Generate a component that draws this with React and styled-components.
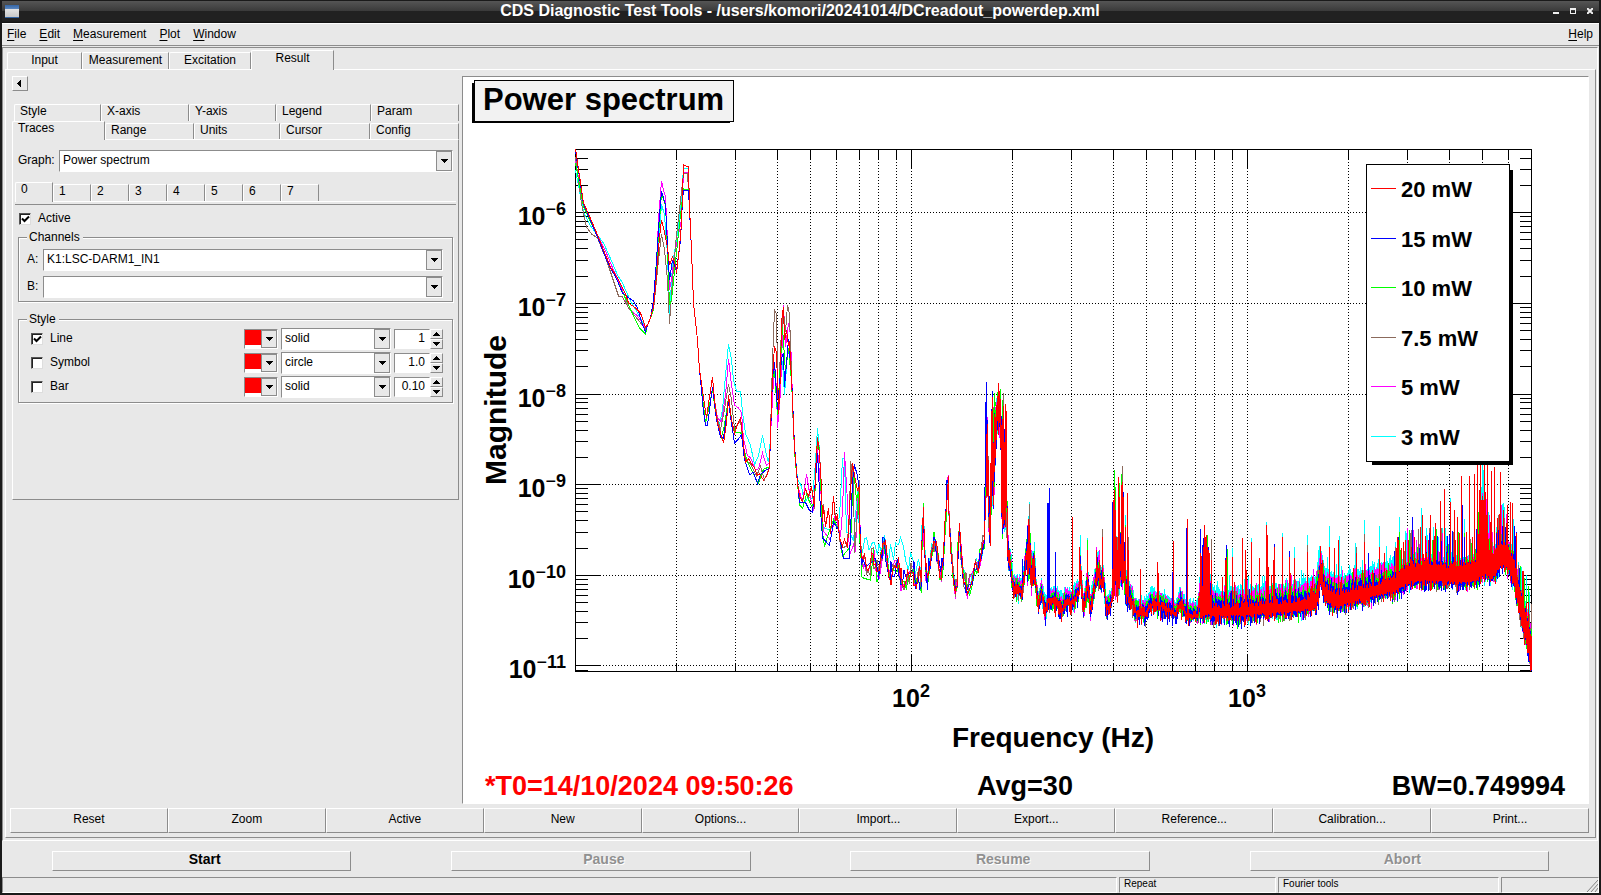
import styled, { createGlobalStyle } from "styled-components";

const GlobalStyle = createGlobalStyle`
  * {
    box-sizing: border-box;
  }
  body {
    margin: 0;
    background: #1a1a1a;
    font-family: "Liberation Sans", Arial, sans-serif;
    font-size: 12px;
    line-height: 12px;
    color: #000;
  }
  button, input, select {
    font: inherit;
    color: inherit;
    margin: 0;
    padding: 0;
    border: 0;
    border-radius: 0;
    background: none;
  }
`;

const AppWindow = styled.div`
  display: flex;
  flex-direction: column;
  min-height: 100vh;
  border: solid #1a1a1a;
  border-width: 0 2px 2px;
  background: #e8e8e8;
`;

const TitleBar = styled.header`
  display: flex;
  align-items: center;
  height: 23px;
  padding: 0 6px 2px 3px;
  border-top: 1px solid #1a1a1a;
  background: linear-gradient(#555 0, #3a3a3a 10px, #212121 10px, #212121 20px, #111 22px);
`;

const TitleIcon = styled.span`
  width: 14px;
  height: 13px;
  background: linear-gradient(#3465a4 0, #5b87c0 4px, #e4e4e4 4px, #c8c8c8 12px, #3465a4 12px);
`;

const TitleText = styled.h1`
  flex: 1;
  margin: 0;
  padding-left: 28px;
  text-align: center;
  color: #fff;
  font-size: 16px;
  line-height: 18px;
  font-weight: 700;
`;

const TitleButtons = styled.div`
  display: flex;
  gap: 11px;
`;

const TitleButton = styled.button`
  display: flex;
  width: 6px;
  height: 6px;
`;

const MenuBar = styled.nav`
  display: flex;
  gap: 13px;
  height: 23px;
  padding: 3px 6px 0 5px;
  border-top: 1px solid #fff;
  border-bottom: 1px solid #8c8c8c;
`;

const MenuItem = styled.button`
  height: 14px;
  text-underline-offset: 2px;

  &:last-child {
    margin-left: auto;
  }
`;

const MainFrame = styled.main`
  display: flex;
  flex: 1;
  flex-direction: column;
  margin: 1px 1px 0 0;
  padding: 2px 1px 2px 2px;
  border: 1px solid;
  border-color: #8c8c8c #fff #fff #8c8c8c;
`;

const TabRow = styled.div`
  display: flex;
  align-items: flex-end;
  padding-left: ${(p) => p.$indent || 0}px;
`;

const Tab = styled.button`
  width: ${(p) => p.$width}px;
  height: ${(p) => (p["aria-selected"] ? p.$height + 3 : p.$height)}px;
  margin-bottom: ${(p) => (p["aria-selected"] ? "-1px" : "0")};
  padding: ${(p) => (p.$centered ? "1px 0 0" : "0 0 0 5px")};
  display: flex;
  justify-content: ${(p) => (p.$centered ? "center" : "flex-start")};
  border: 1px solid;
  border-color: #fff #8c8c8c transparent #fff;
  border-bottom: 0;
  border-radius: 2px 0 0 0;
  background: #e8e8e8;
  z-index: 1;
`;

const TabPanel = styled.section`
  display: flex;
  flex: 1;
  flex-direction: column;
  gap: 4px;
  padding: 6px 6px 4px 4px;
  border: 1px solid;
  border-color: #fff #8c8c8c #8c8c8c #fff;
`;

const ResultArea = styled.div`
  display: flex;
  flex: 1;
  align-items: stretch;
`;

const SidePanel = styled.aside`
  flex: 0 0 452px;
  padding: 0 3px 0 2px;
`;

const RaisedButton = styled.button`
  border: 1px solid;
  border-color: #fff #8c8c8c #8c8c8c #fff;
  background: #e8e8e8;
`;

const CollapseButton = styled(RaisedButton)`
  display: flex;
  align-items: center;
  justify-content: center;
  width: 16px;
  height: 15px;
  margin-bottom: 13px;
  padding-right: 2px;
`;

const OptionPanel = styled.div`
  height: 361px;
  padding: 10px 5px 0 5px;
  border: 1px solid;
  border-color: #fff #8c8c8c #8c8c8c #fff;
`;

const Field = styled.label`
  display: flex;
  align-items: center;
  margin-bottom: ${(p) => p.$below || 0}px;
`;

const FieldLabel = styled.span`
  width: ${(p) => p.$width}px;
  padding-bottom: 3px;
`;

const ComboBox = styled.span`
  position: relative;
  display: flex;
  flex: 1;
  height: 22px;
  border: 1px solid;
  border-color: #8c8c8c #fff #fff #8c8c8c;
  background: #fff;
`;

const ComboSelect = styled.select`
  appearance: none;
  flex: 1;
  min-width: 0;
  padding: 0 18px 3px 3px;
  line-height: 16px;
`;

const ComboArrow = styled.span`
  position: absolute;
  top: 0;
  right: 0;
  bottom: 0;
  display: flex;
  align-items: center;
  justify-content: center;
  width: 16px;
  border: 1px solid #8c8c8c;
  background: #e8e8e8;
  pointer-events: none;
`;

const TraceRule = styled.div`
  height: 4px;
  border-top: 1px solid #fff;
  border-bottom: 1px solid #8c8c8c;
`;

const TraceTabs = styled.div`
  margin: 0 -3px 8px -3px;
  padding-top: 3px;
`;

const CheckField = styled.label`
  display: flex;
  align-items: center;
  gap: 7px;
  height: 12px;
  margin-left: ${(p) => p.$indent}px;
`;

const CheckText = styled.span`
  padding-bottom: 3px;
`;

const CheckBox = styled.span`
  position: relative;
  display: flex;
  width: 12px;
  height: 12px;

  svg {
    position: absolute;
    top: 2px;
    left: 2px;
    display: none;
    pointer-events: none;
  }
  input:checked + svg {
    display: block;
  }
`;

const CheckInput = styled.input`
  appearance: none;
  width: 12px;
  height: 12px;
  border: 1px solid;
  border-color: #555 #ddd #ddd #555;
  background: #fff;
  box-shadow: inset 1px 1px 0 #222;
`;

const Group = styled.fieldset`
  min-width: 0;
  margin: ${(p) => p.$above}px 0 0;
  padding: ${(p) => p.$top}px 9px 3px 8px;
  border: 1px solid #8c8c8c;
  box-shadow: 1px 1px 0 #fff, inset 1px 1px 0 #fff;
`;

const GroupTitle = styled.legend`
  padding: 0 3px 0 2px;
  background: #e8e8e8;
`;

const StyleRow = styled.div`
  display: flex;
  align-items: center;
  gap: 3px;
  height: 24px;
`;

const StyleName = styled.div`
  flex: 1;
`;

const ColorButton = styled.button`
  position: relative;
  width: 34px;
  height: 20px;
  padding-bottom: 3px;
  border: 1px solid;
  border-color: #8c8c8c #fff #fff #8c8c8c;
  background: #fff;
`;

const Swatch = styled.span`
  display: block;
  width: 17px;
  height: 15px;
  background: #f00;
`;

const StyleCombo = styled.div`
  display: flex;
  width: 110px;
`;

const Spinner = styled.div`
  display: flex;
  width: 49px;
  height: 20px;
`;

const SpinInput = styled.input`
  appearance: textfield;
  flex: 1;
  min-width: 0;
  padding: 0 4px 3px 0;
  border: 1px solid;
  border-color: #8c8c8c #fff #fff #8c8c8c;
  background: #fff;
  text-align: right;

  &::-webkit-inner-spin-button {
    appearance: none;
    margin: 0;
  }
`;

const SpinButtons = styled.div`
  display: flex;
  flex-direction: column;
  width: 13px;
`;

const SpinButton = styled(RaisedButton)`
  display: flex;
  flex: 1;
  align-items: center;
  justify-content: center;
`;

const Canvas = styled.div`
  flex: 1;
  min-width: 0;
  border: 1px solid;
  border-color: #8c8c8c #fff #fff #8c8c8c;
  background: #fff;

  svg {
    display: block;
    width: 100%;
    height: auto;
  }
`;

const PlotActions = styled.div`
  display: grid;
  grid-template-columns: repeat(10, 1fr);
`;

const PlotButton = styled(RaisedButton)`
  height: 25px;
  padding-bottom: 3px;
`;

const RunBar = styled.div`
  display: grid;
  grid-template-columns: repeat(4, 1fr);
  justify-items: center;
  padding: 10px 0 6px;
`;

const RunButton = styled(RaisedButton)`
  width: 75%;
  height: 20px;
  padding: 0 0 7px 6px;
  font-size: 14px;
  line-height: 14px;
  font-weight: 700;

  &:disabled {
    color: #909090;
    text-shadow: 1px 1px 0 #fff;
  }
`;

const StatusBar = styled.footer`
  display: grid;
  grid-template-columns: 1fr 157px 221px 98px;
  gap: 2px;
  font-size: 10px;
`;

const StatusCell = styled.span`
  display: flex;
  justify-content: ${(p) => (p.$grip ? "flex-end" : "flex-start")};
  height: 16px;
  padding-left: 4px;
  border: 1px solid;
  border-color: #8c8c8c #fff #fff #8c8c8c;
`;

const ARROWS = {
  down: "M0 1h7v1h-1v1h-1v1h-1v1h-1v-1h-1v-1h-1v-1h-1z",
  up: "M3 1h1v1h1v1h1v1h1v1h-7v-1h1v-1h1v-1h1z",
};

function Arrow({ dir }) {
  return (
    <svg width="7" height="6" shapeRendering="crispEdges" aria-hidden="true">
      <path d={ARROWS[dir]} />
    </svg>
  );
}

function Combo({ options, ...rest }) {
  return (
    <ComboBox>
      <ComboSelect {...rest}>
        {options.map((o) => (
          <option key={o}>{o}</option>
        ))}
      </ComboSelect>
      <ComboArrow>
        <Arrow dir="down" />
      </ComboArrow>
    </ComboBox>
  );
}

function Check({ label, checked, indent }) {
  return (
    <CheckField $indent={indent}>
      <CheckBox>
        <CheckInput type="checkbox" defaultChecked={checked} />
        <svg width="9" height="8" aria-hidden="true">
          <path d="M1 3.5L3.5 6L8 1.5" fill="none" stroke="#000" strokeWidth="2" />
        </svg>
      </CheckBox>
      <CheckText>{label}</CheckText>
    </CheckField>
  );
}

/* ---------- plot ---------- */

const FRAME = { left: 575.5, top: 149.5, right: 1531.5, bottom: 671.5 };
const fx = (hz) => Math.floor(911.5 + 336 * (Math.log10(hz) - 2)) + 0.5;
const my = (mag) => Math.floor(212.7 - 90.65 * (Math.log10(mag) + 6)) + 0.5;

const decades = (from, to) => {
  const ticks = [];
  for (let d = from; d <= to; d++) {
    for (let m = 1; m < 10; m++) ticks.push({ major: m === 1, value: m * Math.pow(10, d) });
  }
  return ticks;
};
const X_TICKS = decades(1, 3).filter((t) => t.value > 10 && t.value < 7000);
const Y_TICKS = decades(-11, -6).filter((t) => t.value < 4.9e-6);

const BASE = [
  575, 149, 583, 203, 588, 214, 597, 235, 603, 250, 610, 267, 617, 278, 625, 294, 628, 303, 635, 308, 640, 313,
  645, 327, 647, 325, 650, 318, 653, 307, 655, 287, 657, 263, 659, 237, 661, 220, 663, 228, 665, 237, 667, 247,
  669, 265, 672, 257, 675, 265, 676, 273, 679, 247, 681, 223, 682, 193, 683, 165, 688, 167, 689, 207, 691, 250,
  693, 303, 697, 340, 699, 370, 702, 390, 706, 418, 709, 397, 712, 377, 714, 400, 717, 423, 720, 433, 723, 443,
  726, 423, 728, 395, 731, 420, 734, 433, 736, 427, 740, 418, 743, 443, 745, 463, 748, 458, 751, 463, 754, 468,
  757, 475, 759, 473, 763, 480, 766, 475, 769, 468, 770, 433, 772, 377, 774, 345, 776, 353, 778, 413, 780, 373,
  781, 320, 783, 306, 784, 340, 786, 330, 788, 347, 789, 340, 791, 380, 792, 400, 794, 447, 797, 483, 799, 497,
  802, 502, 805, 490, 808, 497, 811, 487, 814, 507, 815, 470, 817, 437, 819, 453, 821, 487, 822, 523, 823, 505,
  825, 527, 828, 507, 830, 533, 833, 495, 835, 520, 837, 513, 839, 537, 842, 547, 844, 538, 847, 547, 850, 490,
  852, 463, 855, 480, 857, 490, 859, 487, 861, 560, 863, 560, 866, 567, 870, 567, 873, 552, 875, 567, 879, 572,
  882, 550, 884, 540, 887, 563, 890, 577, 892, 567, 897, 565, 900, 573, 902, 583, 906, 580, 909, 577, 913, 568,
  915, 580, 918, 573, 921, 583, 923, 505, 925, 567, 927, 580, 930, 560, 933, 543, 935, 540, 938, 560, 941, 580,
  943, 560, 946, 507, 948, 477, 949, 523, 952, 563, 955, 590, 957, 580, 959, 523, 962, 567, 965, 580, 967, 590,
  972, 577, 975, 563, 978, 567, 981, 553, 984, 540, 986, 480, 987, 423, 988, 500, 990, 543, 991, 453, 992, 400,
  993, 503, 995, 413, 996, 440, 998, 388, 999, 400, 1001, 457, 1002, 530, 1003, 407, 1004, 523, 1005, 410,
  1006, 420, 1007, 533, 1008, 563,
];

// stretches where a trace leaves the common curve
const TRACES = [
  {
    name: "3 mW",
    color: "#00ffff",
    rise: 18,
    drop: 0,
    runs: [
      [575, 170, 583, 212, 590, 226, 600, 239, 603, 243, 612, 263, 617, 275, 622, 283, 630, 301, 636, 311, 640, 318, 645, 329],
      [653, 307, 657, 265, 661, 204, 664, 215, 667, 255, 669, 315, 672, 265, 676, 240, 680, 210, 683, 168, 688, 169, 689, 207],
      [717, 420, 719, 424, 722, 410, 725, 375, 728, 344, 731, 360, 733, 380, 736, 391, 740, 392, 742, 410, 745, 434, 750, 443, 754, 465, 758, 455, 762, 437, 766, 455, 768, 463, 769, 455],
      [772, 380, 774, 365, 777, 415, 782, 360, 784, 393, 788, 340, 791, 375],
      [794, 447, 797, 480, 801, 485, 804, 500, 808, 495, 812, 500, 815, 460, 817, 428, 819, 450, 822, 525, 828, 527, 832, 528, 836, 520, 839, 515, 842, 460, 844, 460, 846, 530, 850, 532, 853, 540, 857, 490, 861, 550, 863, 545, 866, 540, 872, 537, 877, 546, 881, 545, 884, 534, 888, 553, 893, 551, 898, 547, 903, 553, 908, 565, 913, 563, 918, 560, 921, 570],
    ],
    spikes: [1080, 535, 1087, 538, 1125, 515, 1187, 578, 1232, 548, 1251, 538, 1266, 522, 1282, 533, 1294, 547, 1307, 535, 1329, 526, 1339, 536, 1355, 543, 1364, 520, 1372, 561, 1379, 526, 1386, 546, 1399, 517, 1405, 531, 1411, 533, 1421, 508, 1427, 535, 1433, 527, 1438, 537, 1450, 498, 1464, 519, 1482, 463, 1483, 470, 1496, 527, 1504, 507, 1507, 505, 1521, 567, 1529, 592],
  },
  {
    name: "5 mW",
    color: "#ff00ff",
    rise: 13,
    drop: 0,
    runs: [
      [575, 160, 583, 207, 588, 216, 600, 241, 605, 251, 613, 270, 620, 285, 628, 308, 637, 316, 645, 328],
      [653, 303, 656, 265, 658, 220, 661, 181, 663, 190, 665, 197, 667, 240, 669, 290, 671, 280, 674, 255, 677, 240, 681, 220, 683, 172, 687, 172, 689, 207],
      [717, 418, 721, 422, 725, 395, 728, 359, 731, 385, 734, 405, 738, 408, 741, 410, 743, 440, 747, 453, 750, 456, 755, 470, 758, 470, 762, 455, 766, 466, 769, 463],
      [770, 433, 774, 360, 776, 390, 777, 428, 780, 390, 783, 306, 785, 345, 788, 321, 790, 335, 793, 433],
      [797, 483, 802, 500, 806, 473, 809, 492, 813, 510, 817, 450, 821, 500, 823, 530, 830, 538, 835, 515, 840, 535, 842, 510, 844, 450, 847, 500, 849, 554, 853, 545, 855, 554, 857, 500, 860, 530, 861, 560],
    ],
    spikes: [1096, 547, 1099, 550, 1115, 492, 1334, 555, 1410, 543, 1450, 508, 1507, 516],
  },
  {
    name: "7.5 mW",
    color: "#8b6a5c",
    rise: 7,
    drop: 1,
    runs: [
      [575, 157, 581, 204, 586, 227, 591, 234, 597, 238, 606, 260, 612, 278, 615, 287, 618, 296, 622, 297, 628, 308, 637, 319, 645, 329],
      [653, 310, 657, 270, 661, 234, 664, 250, 667, 280, 669, 324, 672, 280, 676, 235, 679, 210, 683, 173, 687, 174, 689, 207],
      [717, 420, 720, 429, 723, 415, 728, 384, 731, 400, 734, 429, 740, 421, 743, 445, 746, 460, 750, 463, 756, 475, 760, 467, 764, 478, 769, 465],
      [770, 433, 772, 360, 774, 307, 776, 313, 777, 370, 778, 410, 780, 345, 783, 310, 785, 330, 787, 305, 789, 315, 791, 375, 793, 433],
      [840, 545, 846, 547, 849, 520, 850, 461, 853, 480, 854, 550, 857, 510, 859, 480, 861, 560],
    ],
    spikes: [1102, 529, 1122, 466, 1128, 537, 1211, 539, 1307, 545, 1356, 547, 1364, 534, 1398, 538],
  },
  {
    name: "10 mW",
    color: "#00ff00",
    rise: 7,
    drop: 1,
    runs: [
      [575, 163, 583, 207, 597, 236, 606, 259, 617, 281, 628, 305, 635, 320, 639, 328, 645, 334],
      [653, 310, 657, 250, 661, 193, 665, 205, 667, 250, 669, 305, 671, 300, 675, 262, 680, 215, 683, 189, 688, 190, 689, 207],
      [700, 380, 705, 423, 709, 405, 712, 389, 716, 420, 721, 437, 724, 425, 728, 398, 732, 425, 735, 432, 741, 433, 743, 450, 748, 465, 753, 472, 758, 482, 763, 470, 769, 466],
      [772, 380, 774, 370, 777, 415, 782, 327, 785, 370, 788, 350, 791, 380],
      [794, 450, 799, 505, 802, 508, 806, 495, 811, 507, 814, 500, 817, 436, 819, 450, 822, 530, 824, 545, 829, 530, 833, 520, 838, 530, 842, 555, 850, 545, 853, 465, 856, 500, 858, 490, 861, 562, 863, 573, 870, 572],
      [993, 440, 994, 404, 997, 414, 998, 392, 1000, 389, 1001, 420],
    ],
    spikes: [994, 393, 997, 392, 1000, 389, 1079, 553, 1087, 540, 1114, 470, 1115, 487, 1119, 483, 1121, 474, 1125, 525, 1200, 535, 1207, 535, 1227, 549, 1399, 532, 1450, 520],
  },
  {
    name: "15 mW",
    color: "#0000ff",
    rise: 4,
    drop: 2,
    runs: [
      [575, 151, 583, 204, 597, 237, 606, 260, 617, 281, 622, 293, 627, 297, 633, 301, 637, 308, 641, 322, 645, 332],
      [653, 300, 656, 260, 659, 215, 661, 191, 665, 205, 667, 245, 669, 280, 672, 260, 676, 271, 680, 240, 682, 200, 683, 190, 688, 190, 689, 210],
      [700, 380, 703, 412, 705, 425, 707, 425, 712, 387, 716, 420, 720, 437, 723, 438, 728, 402, 732, 430, 734, 443, 737, 440, 741, 435, 744, 460, 749, 473, 753, 472, 757, 484, 760, 472, 765, 468, 769, 466],
      [772, 377, 774, 360, 777, 410, 781, 360, 783, 355, 784, 385, 788, 337, 791, 375],
      [799, 500, 805, 502, 809, 512, 812, 513, 815, 480, 817, 455, 820, 510, 822, 535, 829, 543, 833, 520, 838, 530, 843, 557, 849, 557, 852, 480, 854, 464, 857, 475, 859, 490, 861, 560, 865, 572, 872, 568, 878, 573],
      [984, 540, 985, 470, 986, 382, 987, 430],
    ],
    spikes: [986, 382, 1022, 559, 1047, 503, 1048, 503, 1049, 488, 1055, 552, 1112, 502, 1123, 492, 1172, 572, 1186, 528, 1200, 529, 1202, 545, 1203, 538, 1208, 547, 1225, 558, 1226, 545, 1259, 558, 1274, 544, 1289, 551, 1368, 553, 1398, 537, 1412, 517, 1419, 548, 1422, 526, 1433, 540, 1440, 555, 1462, 505, 1486, 537, 1505, 527, 1516, 532, 1519, 568],
  },
  {
    name: "20 mW",
    color: "#ff0000",
    rise: 0,
    drop: 0,
    runs: [],
    spikes: [998, 388, 1003, 406, 1006, 420, 1072, 517, 1079, 547, 1087, 550, 1096, 550, 1099, 560, 1102, 537, 1113, 500, 1114, 490, 1115, 510, 1117, 550, 1118, 477, 1119, 497, 1121, 485, 1122, 482, 1123, 497, 1125, 527, 1127, 493, 1128, 550, 1140, 569, 1157, 562, 1158, 573, 1173, 541, 1187, 519, 1200, 553, 1201, 556, 1203, 547, 1204, 525, 1205, 537, 1206, 535, 1207, 547, 1208, 550, 1209, 553, 1211, 560, 1222, 577, 1225, 560, 1226, 557, 1232, 557, 1234, 582, 1242, 538, 1245, 550, 1246, 570, 1251, 542, 1259, 558, 1266, 525, 1267, 535, 1268, 567, 1271, 575, 1273, 560, 1274, 547, 1282, 537, 1289, 557, 1290, 573, 1294, 558, 1307, 552, 1312, 577, 1320, 546, 1322, 560, 1329, 547, 1334, 548, 1338, 540, 1341, 577, 1353, 568, 1356, 553, 1362, 570, 1364, 542, 1372, 570, 1379, 547, 1384, 553, 1396, 548, 1397, 537, 1398, 540, 1403, 542, 1405, 540, 1408, 540, 1411, 547, 1414, 537, 1417, 553, 1420, 527, 1422, 515, 1426, 553, 1428, 540, 1430, 515, 1433, 540, 1435, 523, 1440, 501, 1444, 489, 1447, 553, 1450, 502, 1454, 510, 1455, 540, 1457, 517, 1461, 476, 1466, 532, 1469, 476, 1472, 537, 1474, 474, 1477, 465, 1479, 490, 1480, 465, 1481, 500, 1482, 496, 1483, 500, 1484, 465, 1485, 492, 1487, 465, 1489, 550, 1491, 471, 1494, 467, 1497, 518, 1500, 472, 1503, 510, 1506, 523, 1507, 505, 1510, 502, 1512, 503, 1516, 533, 1526, 603, 1528, 602],
  },
];

// x, top and bottom of the noise band on the dense part of the axis
const BAND_START = 986;
const BAND_END = 1531;
const BAND = [
  [985, 470, 490], [987, 423, 500], [989, 500, 543], [992, 400, 500], [994, 420, 500], [996, 400, 440],
  [999, 388, 430], [1001, 410, 460], [1003, 405, 530], [1006, 420, 535], [1007, 500, 550],
  [1008, 545, 570], [1011, 565, 582], [1013, 583, 597], [1017, 583, 595], [1021, 588, 600], [1023, 575, 590],
  [1026, 545, 570], [1027, 530, 580], [1029, 503, 583], [1031, 560, 590], [1034, 555, 580], [1036, 585, 600],
  [1038, 600, 613], [1041, 588, 600], [1045, 605, 618], [1048, 595, 610], [1052, 597, 605], [1056, 595, 612],
  [1062, 602, 617], [1065, 595, 608], [1070, 598, 610], [1075, 592, 605], [1078, 588, 600], [1080, 560, 590],
  [1083, 600, 615], [1085, 592, 608], [1087, 570, 595], [1090, 602, 617], [1094, 580, 595], [1097, 560, 585],
  [1100, 570, 590], [1103, 575, 590], [1106, 604, 617], [1111, 597, 608], [1113, 540, 600], [1118, 540, 597],
  [1121, 530, 585], [1124, 545, 590], [1125, 575, 605], [1128, 588, 605], [1132, 595, 612], [1134, 605, 619],
  [1145, 608, 621], [1150, 598, 612], [1165, 601, 615], [1175, 611, 619], [1180, 595, 610], [1186, 610, 621],
  [1197, 610, 622], [1199, 590, 619], [1209, 590, 617], [1212, 608, 619], [1220, 609, 618], [1240, 608, 618],
  [1250, 607, 617], [1280, 605, 615], [1300, 602, 613], [1315, 597, 610], [1318, 580, 600], [1320, 568, 585],
  [1324, 588, 602], [1335, 596, 609], [1360, 590, 602], [1380, 586, 597], [1395, 579, 593], [1410, 567, 584],
  [1430, 566, 583], [1445, 568, 584], [1460, 568, 585], [1475, 564, 583], [1480, 520, 578], [1486, 520, 576],
  [1489, 556, 580], [1494, 558, 578], [1500, 546, 567], [1508, 550, 570], [1514, 563, 588], [1520, 597, 620],
  [1526, 617, 645], [1531, 642, 671],
];

function random(seed) {
  let s = seed;
  return () => {
    s = (s * 16807) % 2147483647;
    return s / 2147483647;
  };
}

function bandAt(x) {
  const i = Math.max(1, BAND.findIndex((b) => b[0] >= x));
  const [a, b] = [BAND[i - 1], BAND[i]];
  const t = (x - a[0]) / (b[0] - a[0]);
  return [a[1] + (b[1] - a[1]) * t, a[2] + (b[2] - a[2]) * t];
}

function pairs(list) {
  const out = [];
  for (let i = 0; i < list.length; i += 2) out.push([list[i], list[i + 1]]);
  return out;
}

function tracePath(trace, index) {
  const rand = random(index * 7919 + 101);
  const runs = trace.runs.map(pairs);
  const inRun = (x) => runs.some((r) => x >= r[0][0] && x <= r[r.length - 1][0]);
  const points = pairs(BASE)
    .filter((p) => !inRun(p[0]))
    .concat(...runs)
    .sort((a, b) => a[0] - b[0]);
  const jitter = trace.rise ? 1 : 0.5;

  let d = "";
  points.forEach(([x, y], i) => {
    const noise = x > 860 ? 16 : x > 740 ? 5 : 0;
    if (i > 0 && x > 860) {
      const mid = (points[i - 1][1] + y) / 2 + (rand() - 0.5) * 26;
      d += `L${(points[i - 1][0] + x) / 2} ${mid.toFixed(1)}`;
    }
    d += `${i ? "L" : "M"}${x + 0.5} ${(y + (rand() - 0.4) * noise * jitter).toFixed(1)}`;
  });

  const spikes = new Map(pairs(trace.spikes));
  for (let x = BAND_START; x <= BAND_END; x++) {
    const [top, bottom] = bandAt(x);
    const h = bottom - top;
    const sparse = x < 1200;
    const lift = h > 35 ? 0 : trace.rise * (sparse ? 0.6 : x > 1395 ? 0.4 : 1);
    const tall = rand() > 0.78 ? rand() * (x > 1390 ? 34 : 10) : 0;
    let y1 = sparse ? top - lift + (rand() - 0.2) * h * 0.5 : top - lift - rand() * 6 - tall;
    let y2 = bottom + trace.drop - 3 + rand() * rand() * 13;
    if (sparse) y2 -= rand() * h * 0.35;
    if (spikes.has(x)) y1 = spikes.get(x);
    d += `M${x + 0.5} ${y1.toFixed(1)}V${Math.min(671, Math.max(y2, y1 + 4)).toFixed(1)}`;
  }
  return d;
}

const PATHS = TRACES.map((t, i) => ({ color: t.color, d: tracePath(t, i) }));

function PowerOfTen({ x, y, sign, exp, anchor }) {
  return (
    <text x={x} y={y} fontSize="25" textAnchor={anchor}>
      10
      <tspan dy="-10" fontSize="18" fontWeight="400">
        {sign}
      </tspan>
      <tspan dy={sign ? 0 : -10} fontSize="18">
        {exp}
      </tspan>
    </text>
  );
}

function SpectrumPlot() {
  const { left, top, right, bottom } = FRAME;
  const legend = [...TRACES].reverse();
  return (
    <svg
      viewBox="463 77 1125 726"
      role="img"
      aria-label="Power spectrum"
      fontFamily="'Liberation Sans', Arial, sans-serif"
      fontWeight="700"
    >
      <g shapeRendering="crispEdges">
        <path d="M472 83h6v38h252v2h-258z" />
        <rect x="474.5" y="80.5" width="259" height="41" fill="#f2f2f2" stroke="#000" />
      </g>
      <text x="483" y="110" fontSize="31">
        Power spectrum
      </text>

      <g shapeRendering="crispEdges" fill="none" stroke="#000">
        <g strokeDasharray="1 2">
          {X_TICKS.map((t) => (
            <path key={t.value} d={`M${fx(t.value)} ${top}V${bottom}`} />
          ))}
          {Y_TICKS.filter((t) => t.major).map((t) => (
            <path key={t.value} d={`M${left} ${my(t.value)}H${right}`} />
          ))}
        </g>
        {X_TICKS.map((t) => {
          const len = t.major ? 18 : 9;
          return <path key={t.value} d={`M${fx(t.value)} ${top}v${len}M${fx(t.value)} ${bottom}v-${len}`} />;
        })}
        {Y_TICKS.map((t) => {
          const len = t.major ? 24 : 12;
          return <path key={t.value} d={`M${left} ${my(t.value)}h${len}M${right} ${my(t.value)}h-${len}`} />;
        })}
        <path d={`M${left} 670.5h12M${right} 670.5h-12`} />
        <rect x={left} y={top} width={right - left} height={bottom - top} />
        {PATHS.map((p) => (
          <path key={p.color} d={p.d} stroke={p.color} />
        ))}
      </g>

      {[-6, -7, -8, -9, -10, -11].map((e) => (
        <PowerOfTen key={e} x="566" y={my(Math.pow(10, e)) + 12} sign="−" exp={-e} anchor="end" />
      ))}
      <PowerOfTen x="911" y="707" exp="2" anchor="middle" />
      <PowerOfTen x="1247" y="707" exp="3" anchor="middle" />
      <text x="1053" y="747" fontSize="28" textAnchor="middle">
        Frequency (Hz)
      </text>
      <text transform="translate(506 485) rotate(-90)" fontSize="30">
        Magnitude
      </text>

      <g shapeRendering="crispEdges">
        <rect x="1372" y="170" width="141" height="295" />
        <rect x="1366.5" y="164.5" width="143" height="297" fill="#fff" stroke="#000" />
        {legend.map((t, i) => (
          <path key={t.name} d={`M1371 ${188.5 + Math.round(i * 49.6)}h25`} stroke={t.color} />
        ))}
      </g>
      {legend.map((t, i) => (
        <text key={t.name} x="1401" y={197 + Math.round(i * 49.6)} fontSize="22">
          {t.name}
        </text>
      ))}

      <g fontSize="27">
        <text x="485" y="795" fill="#f00">
          *T0=14/10/2024 09:50:26
        </text>
        <text x="1025" y="795" textAnchor="middle">
          Avg=30
        </text>
        <text x="1565" y="795" textAnchor="end">
          BW=0.749994
        </text>
      </g>
    </svg>
  );
}

/* ---------- window ---------- */

const MENUS = ["File", "Edit", "Measurement", "Plot", "Window", "Help"];
const MAIN_TABS = [
  ["Input", 75],
  ["Measurement", 87],
  ["Excitation", 82],
  ["Result", 83],
];
const BACK_TABS = [
  ["Style", 87],
  ["X-axis", 88],
  ["Y-axis", 87],
  ["Legend", 95],
  ["Param", 88],
];
const FRONT_TABS = [
  ["Traces", 93],
  ["Range", 89],
  ["Units", 86],
  ["Cursor", 90],
  ["Config", 89],
];
const TRACE_TABS = ["0", "1", "2", "3", "4", "5", "6", "7"].map((n) => [n, 38]);
const STYLE_ROWS = [
  { name: "Line", checked: true, style: "solid", size: "1", step: "1" },
  { name: "Symbol", checked: false, style: "circle", size: "1.0", step: "0.1" },
  { name: "Bar", checked: false, style: "solid", size: "0.10", step: "0.01" },
];
const PLOT_ACTIONS = [
  "Reset", "Zoom", "Active", "New", "Options...", "Import...", "Export...", "Reference...", "Calibration...", "Print...",
];

function Tabs({ items, selected, centered, indent, label, height = 17 }) {
  return (
    <TabRow role="tablist" aria-label={label} $indent={indent}>
      {items.map(([name, width]) => (
        <Tab
          key={name}
          role="tab"
          aria-selected={name === selected}
          $width={width}
          $height={height}
          $centered={centered}
        >
          {name}
        </Tab>
      ))}
    </TabRow>
  );
}

function App() {
  return (
    <AppWindow>
      <GlobalStyle />
      <TitleBar>
        <TitleIcon />
        <TitleText>CDS Diagnostic Test Tools - /users/komori/20241014/DCreadout_powerdep.xml</TitleText>
        <TitleButtons>
          <TitleButton aria-label="Minimize">
            <svg width="6" height="6">
              <path d="M0 4h6v2h-6z" fill="#eee" />
            </svg>
          </TitleButton>
          <TitleButton aria-label="Maximize">
            <svg width="6" height="6">
              <path d="M0 0h6v6h-6zM1 2v3h4v-3z" fill="#eee" fillRule="evenodd" />
            </svg>
          </TitleButton>
          <TitleButton aria-label="Close">
            <svg width="6" height="6">
              <path d="M0 0L6 6M6 0L0 6" stroke="#eee" strokeWidth="2" />
            </svg>
          </TitleButton>
        </TitleButtons>
      </TitleBar>

      <MenuBar>
        {MENUS.map((m) => (
          <MenuItem key={m}>
            <u>{m[0]}</u>
            {m.slice(1)}
          </MenuItem>
        ))}
      </MenuBar>

      <MainFrame>
        <Tabs items={MAIN_TABS} selected="Result" centered indent={2} label="Sections" />
        <TabPanel>
          <ResultArea>
            <SidePanel>
              <CollapseButton aria-label="Collapse panel">
                <svg width="4" height="7" shapeRendering="crispEdges">
                  <path d="M4 0v7h-1v-1h-1v-1h-1v-1h-1v-1h1v-1h1v-1h1v-1z" />
                </svg>
              </CollapseButton>
              <Tabs items={BACK_TABS} indent={2} label="Plot options" />
              <Tabs items={FRONT_TABS} selected="Traces" label="Trace options" height={16} />
              <OptionPanel>
                <Field $below={7}>
                  <FieldLabel $width={41}>Graph:</FieldLabel>
                  <Combo options={["Power spectrum"]} />
                </Field>
                <TraceTabs>
                  <Tabs items={TRACE_TABS} selected="0" label="Trace" />
                  <TraceRule />
                </TraceTabs>
                <Check label="Active" checked indent={1} />
                <Group $above={6} $top={6}>
                  <GroupTitle>Channels</GroupTitle>
                  <Field $below={5}>
                    <FieldLabel $width={16}>A:</FieldLabel>
                    <Combo options={["K1:LSC-DARM1_IN1"]} />
                  </Field>
                  <Field>
                    <FieldLabel $width={16}>B:</FieldLabel>
                    <Combo options={[""]} />
                  </Field>
                </Group>
                <Group $above={11} $top={2}>
                  <GroupTitle>Style</GroupTitle>
                  {STYLE_ROWS.map((row) => (
                    <StyleRow key={row.name}>
                      <StyleName>
                        <Check label={row.name} checked={row.checked} indent={4} />
                      </StyleName>
                      <ColorButton aria-label={`${row.name} color`}>
                        <Swatch />
                        <ComboArrow>
                          <Arrow dir="down" />
                        </ComboArrow>
                      </ColorButton>
                      <StyleCombo>
                        <Combo options={[row.style]} aria-label={`${row.name} style`} />
                      </StyleCombo>
                      <Spinner>
                        <SpinInput type="number" step={row.step} defaultValue={row.size} aria-label={`${row.name} size`} />
                        <SpinButtons>
                          <SpinButton aria-label="Increase">
                            <Arrow dir="up" />
                          </SpinButton>
                          <SpinButton aria-label="Decrease">
                            <Arrow dir="down" />
                          </SpinButton>
                        </SpinButtons>
                      </Spinner>
                    </StyleRow>
                  ))}
                </Group>
              </OptionPanel>
            </SidePanel>
            <Canvas>
              <SpectrumPlot />
            </Canvas>
          </ResultArea>
          <PlotActions>
            {PLOT_ACTIONS.map((a) => (
              <PlotButton key={a}>{a}</PlotButton>
            ))}
          </PlotActions>
        </TabPanel>
      </MainFrame>

      <RunBar>
        <RunButton>Start</RunButton>
        <RunButton disabled>Pause</RunButton>
        <RunButton disabled>Resume</RunButton>
        <RunButton disabled>Abort</RunButton>
      </RunBar>

      <StatusBar>
        <StatusCell />
        <StatusCell>Repeat</StatusCell>
        <StatusCell>Fourier tools</StatusCell>
        <StatusCell $grip>
          <svg width="13" height="14" aria-hidden="true">
            <path d="M2 14L13 2M6 14L13 6M10 14L13 10" stroke="#808080" />
          </svg>
        </StatusCell>
      </StatusBar>
    </AppWindow>
  );
}

export default App;
